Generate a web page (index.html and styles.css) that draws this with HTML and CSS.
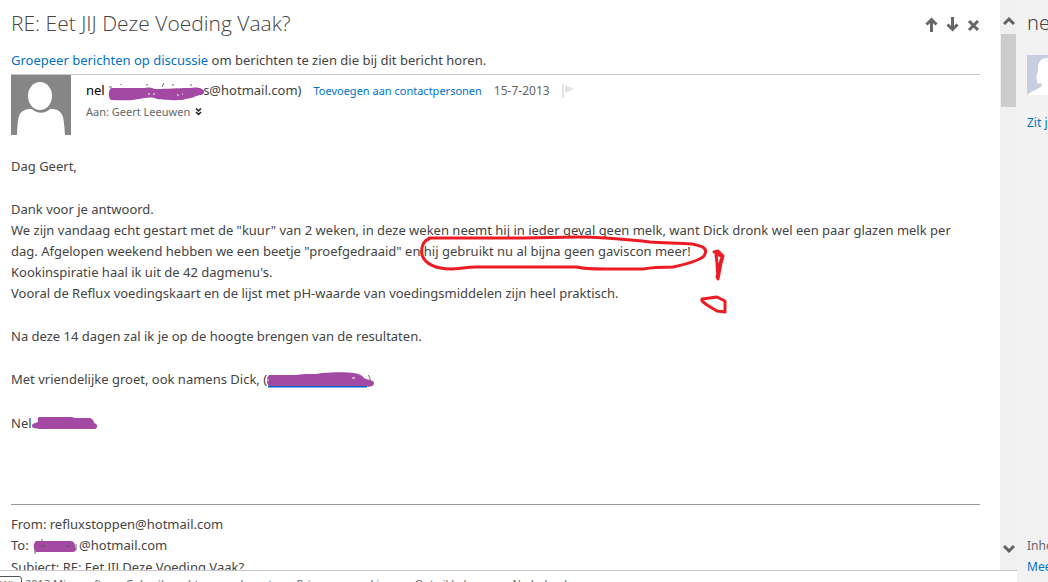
FILE: index.html
```html
<!DOCTYPE html>
<html lang="nl">
<head>
<meta charset="utf-8">
<meta name="viewport" content="width=device-width, initial-scale=1">
<title>RE: Eet JIJ Deze Voeding Vaak?</title>
<link rel="stylesheet" href="styles.css">
</head>
<body>
<div class="app">
  <div class="reader">
    <main class="message">
      <header class="subject-row">
        <h1 class="subject">RE: Eet JIJ Deze Voeding Vaak?</h1>
        <div class="tools">
          <button class="tool" aria-label="Vorig bericht"><svg width="13" height="16" viewBox="0 0 13 16"><path d="M6.500 15V2M1.500 7.500l5-5 5 5" fill="none" stroke="#666" stroke-width="3"/></svg></button>
          <button class="tool" aria-label="Volgend bericht"><svg width="13" height="16" viewBox="0 0 13 16"><path d="M6.500 0v13M1.500 7.500l5 5 5-5" fill="none" stroke="#666" stroke-width="3"/></svg></button>
          <button class="tool" aria-label="Sluiten"><svg width="13" height="16" viewBox="0 0 13 16"><path d="M2 4l9 9M11 4l-9 9" fill="none" stroke="#666" stroke-width="3"/></svg></button>
        </div>
      </header>
      <p class="group-hint"><a href="#">Groepeer berichten op discussie</a> om berichten te zien die bij dit bericht horen.</p>
      <section class="sender">
        <svg class="avatar" width="60" height="60" viewBox="0 0 60 60"><path fill="#868686" d="M0 0h60v60H0z"/><ellipse cx="29" cy="21" rx="12" ry="14" fill="#fff"/><path d="M6 60c1-16 1-21 6-24 3-2 6-2 9-2 5 5 13 5 18 0 4 0 7 0 10 3 4 4 4 10 5 23z" fill="#fff"/></svg>
        <div class="sender-info">
          <div class="from-line">
            <span class="from"><span class="name">nel</span> <span class="redact redact-from"><svg class="ink" width="98" height="20" viewBox="0 0 98 20"><path d="M1 5h3M13 2v1M39 2v2M56 1l-2 4M65 2v2M83 2v2" stroke="#666" fill="none"/><path d="M3 6h34c4-1 7 0 10 1 14 0 20-1 35-1 5-1 12-1 14 3 1 4-4 4-8 5-3 2-7 2-10 3-4 2-22 1-29 0-6-3-12-1-18 0-8 2-18 1-28 1-3-2-3-9 0-12z" fill="#a349a4"/><path d="M40 12h2m3 0h2m22 1h2m3-1h1" stroke="#fff"/></svg></span>s@hotmail.com)</span>
            <a class="small" href="#">Toevoegen aan contactpersonen</a>
            <time class="date">15-7-2013</time>
            <svg width="12" height="14" viewBox="0 0 12 14"><path fill="#e3e3e3" d="M0 0h2v14H0zM3 1l9 4-9 4z"/></svg>
          </div>
          <div class="to-line">Aan: Geert Leeuwen <svg class="expand" width="7" height="8" viewBox="0 0 7 8"><path d="M1 .5l2.500 2.500L6 .5M1 4l2.500 2.500L6 4" fill="none" stroke="#222" stroke-width="1.500"/></svg></div>
        </div>
      </section>
      <article class="body">
        <p>Dag Geert,</p>
        <p>Dank voor je antwoord.<br>We zijn vandaag echt gestart met de "kuur" van 2 weken, in deze weken neemt hij in ieder geval geen melk, want Dick dronk wel een paar glazen melk per dag. Afgelopen weekend hebben we een beetje "proefgedraaid" en <span class="marked">hij gebruikt nu al bijna geen gaviscon meer!<svg class="scribble" width="312" height="84" viewBox="0 0 312 84"><g fill="none" stroke="#ed1c24" stroke-width="3" stroke-linejoin="round" stroke-linecap="round"><path d="M9 4C2 6 1 15 2 20c3 9 14 14 29 14 9 0 15-2 24-2h102c7 2 18 2 28 2h38c11-2 20-2 30-2 14-3 26-6 31-11 5-8-2-10-12-12-14-1-29-1-42-2-20-2-41-5-72-5L103 3H9z"/><path d="M294 17l4-1 5 5-2 7-3 16-1-16-1-9 6 2-2 8-3 13"/><path d="M282 64l15-2 8 4v11l-8-1-10-6-5-4z"/></g></svg></span><br>Kookinspiratie haal ik uit de 42 dagmenu's.<br>Vooral de Reflux voedingskaart en de lijst met pH-waarde van voedingsmiddelen zijn heel praktisch.</p>
        <p>Na deze 14 dagen zal ik je op de hoogte brengen van de resultaten.</p>
        <p>Met vriendelijke groet, ook namens Dick, (<span class="redact redact-sign"><svg class="ink" width="108" height="20" viewBox="0 0 108 20"><path d="M1 15.500h99" stroke="#06c" stroke-width="2"/><path d="M101 4c3 3 3 8 0 12" stroke="#666" fill="none"/><path d="M2 4h28c6-2 18 0 25-2 12-1 25-1 32 0 5 1 8 2 10 5 4 2 10 2 10 5 0 4-5 4-8 3H2c-3-3-3-8 0-11z" fill="#a349a4"/><path d="M85 7h3M1 8v2" stroke="#fff"/></svg></span></p>
        <p>Nel<span class="redact redact-nel"><svg class="ink" width="68" height="20" viewBox="0 0 68 20"><path d="M7 3h33l3 1h15c3 1 4 3 4 5 4 1 4 5 1 6H7c-2-1-7 0-7-3 0-3 4-3 6-4 0-2-1-4 1-5z" fill="#a349a4"/></svg></span></p>
      </article>
      <hr class="divider">
      <section class="quoted">From: refluxstoppen@hotmail.com<br>To: <span class="redact redact-to"><svg class="ink" width="48" height="20" viewBox="0 0 48 20"><path d="M10 2v3M3 13v4M44 7v6" stroke="#666"/><path d="M4 4h33c5 0 6 2 6 6 2 2 1 5-2 5H4c-3-2-3-9 0-11z" fill="#a349a4"/><path d="M9 9h4M34 9h4" stroke="#555"/></svg></span>@hotmail.com<br>Subject: RE: Eet JIJ Deze Voeding Vaak?</section>
    </main>
    <div class="scrollbar">
      <svg width="12" height="10" viewBox="0 0 12 10"><path d="M1 8l5-5 5 5" fill="none" stroke="#606060" stroke-width="3"/></svg>
      <div class="thumb"></div>
      <svg width="12" height="10" viewBox="0 0 12 10"><path d="M1 2l5 5 5-5" fill="none" stroke="#606060" stroke-width="3"/></svg>
    </div>
    <footer class="footer">
      <span class="status">Win</span>
      <span>2013 Microsoft</span><span>Gebruiksrechtovereenkomst</span><span>Privacy en cookies</span><span>Ontwikkelaars</span><span>Nederlands</span>
    </footer>
  </div>
  <aside class="side">
    <h2 class="side-name">nel</h2>
    <svg class="side-avatar" width="40" height="40" viewBox="0 0 40 40"><path fill="#c7cee2" d="M0 0h40v40H0z"/><path d="M0 40c3-3 9-5 14-8 1-2 1-3 0-4-4 1-4 0-4-3-1-1-1-2 1-9 0-9 2-13 9-13h20v37z" fill="#fff"/></svg>
    <a class="side-link" href="#">Zit je vast?</a>
    <div class="side-bottom">Inhoud<br><a href="#">Meer</a><br><a href="#">informatie</a></div>
  </aside>
</div>
</body>
</html>
```
FILE: styles.css
```css
* { box-sizing: border-box; }
body { margin: 0; background: #fff; color: #444; font-family: "Noto Sans", "Open Sans", sans-serif; font-size: 13px; line-height: 21px; }
a { color: #0072c6; text-decoration: none; }
p, h1, h2 { margin: 0; font-weight: 400; }
svg { flex: none; }
.app { display: grid; grid-template-columns: minmax(0, 1fr) 31px; height: 100vh; overflow: hidden; }
.reader { display: grid; grid-template-columns: minmax(0, 1fr) 17px; grid-template-rows: minmax(0, 1fr) 12px; min-height: 0; }
.message { overflow: hidden; padding: 8px 20px 0 11px; }
.subject-row { display: flex; justify-content: space-between; height: 42px; }
.subject { font-family: "Open Sans", sans-serif; font-size: 21px; font-weight: 300; line-height: 30px; }
.tools { display: flex; gap: 8px; align-items: flex-start; padding-top: 9px; }
.tool { display: flex; padding: 0; border: 0; background: none; }
.group-hint { height: 25px; border-bottom: 1px solid #c8c8c8; }
.sender { display: flex; gap: 15px; }
.sender-info { padding-top: 5px; }
.from-line { display: flex; align-items: center; gap: 12px; white-space: nowrap; }
.name { color: #000; }
.small { font-size: 11px; }
.date { font-size: 12px; }
.date, .to-line { color: #666; }
.to-line { font-size: 11px; line-height: 20px; }
.expand { margin-left: 2px; }
.redact { display: inline-block; position: relative; height: 20px; vertical-align: middle; }
.redact-from { width: 95px; }
.redact-sign { width: 108px; }
.redact-nel { width: 68px; }
.redact-to { width: 47px; }
.ink { position: absolute; left: 0; top: 0; }
.body { padding: 21px 15px 0 0; }
.body p { margin-bottom: 22px; }
.marked { position: relative; }
.scribble { position: absolute; left: -4px; top: -7px; }
.divider { height: 1px; margin: 70px 0 9px; border: 0; background: #999; }
.scrollbar { display: flex; flex-direction: column; align-items: center; background: #f0f0f0; padding: 16px 1px; }
.thumb { width: 15px; height: 73px; margin: 8px 0 auto; background: #cdcdcd; }
.footer { grid-column: 1 / -1; position: relative; display: flex; gap: 24px; overflow: hidden; border-top: 1px solid #c8c8c8; padding: 5px 0 0 25px; font-size: 11px; line-height: 16px; color: #666; white-space: nowrap; }
.status { position: absolute; left: -1px; top: 5px; width: 23px; height: 20px; border: 1px solid #555; border-radius: 0 3px 0 0; background: #fff; overflow: hidden; }
.side { display: flex; flex-direction: column; overflow: hidden; background: #f2f2f2; padding: 8px 0 0 10px; white-space: nowrap; }
.side-name { font-size: 20px; font-weight: 300; line-height: 30px; }
.side-avatar { margin-top: 17px; }
.side-link { margin-top: 17px; font-size: 12px; }
.side-bottom { margin: auto 0 -16px; font-size: 12px; color: #666; }
```
